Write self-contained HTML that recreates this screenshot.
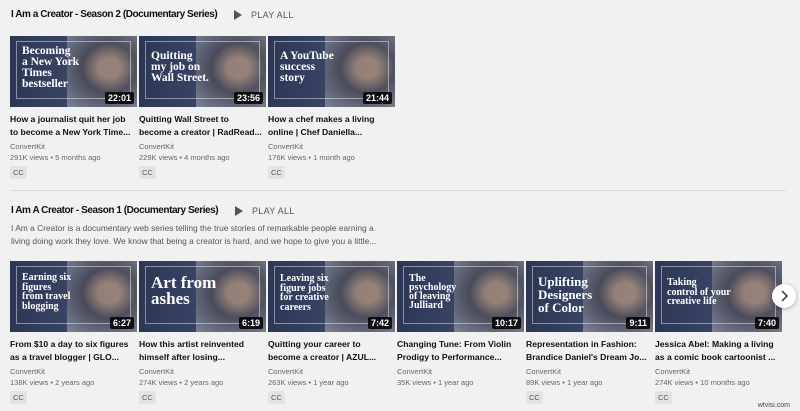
<!DOCTYPE html>
<html><head><meta charset="utf-8"><style>
body{margin:0;width:800px;height:411px;background:#f1f1f1;font-family:"Liberation Sans",sans-serif;position:relative;overflow:hidden;color:#0f0f0f}
.h{position:absolute;font-size:10px;font-weight:bold;color:#111;letter-spacing:-.45px}
.pa{position:absolute;font-size:9px;color:#555;letter-spacing:.3px}
.pa:before{content:"";position:absolute;left:-17px;top:0;border-left:8px solid #555;border-top:5px solid transparent;border-bottom:5px solid transparent}
.card{position:absolute;width:127px}
.th{width:127px;height:71px;position:relative;overflow:hidden;background:linear-gradient(90deg,#2c3655 0%,#3a4566 50%,#6a7088 100%)}
.th .fr{position:absolute;left:6px;top:5px;right:6px;bottom:8px;border:1px solid rgba(255,255,255,.45)}
.th .p{position:absolute;right:0;top:0;width:55%;height:100%;background:radial-gradient(ellipse at 60% 45%,#a58a78 0 18%,#4a4a55 45%,#8e93a5 100%);opacity:.8}
.th .t{position:absolute;left:12px;top:10px;font-family:"Liberation Serif",serif;color:#fff;font-size:11.5px;line-height:11px;font-weight:bold;z-index:2}
.th .d{position:absolute;right:3px;bottom:3px;background:rgba(0,0,0,.85);color:#fff;font-size:9px;font-weight:bold;padding:1px 3px;border-radius:2px;z-index:3}
.ti{font-size:8.6px;font-weight:bold;line-height:12.5px;margin-top:6px;white-space:nowrap;overflow:hidden}
.ch{font-size:7.5px;color:#666;margin-top:4px}
.v{font-size:7.5px;color:#666;margin-top:2px}
.cc{display:inline-block;background:#e3e3e3;color:#555;font-size:7.5px;padding:2px 3px;margin-top:4px;border-radius:2px}
.desc{position:absolute;left:11px;top:222px;font-size:8.4px;line-height:13px;color:#555;width:380px}
</style></head><body>
<div class="h" style="left:11px;top:9px">I Am a Creator - Season 2 (Documentary Series)</div>
<div class="pa" style="left:251px;top:10px">PLAY ALL</div>

<div class="card" style="left:10px;top:36px"><div class="th"><div class="p"></div><div class="fr"></div><div class="t">Becoming<br>a New York<br>Times<br>bestseller</div><div class="d">22:01</div></div>
<div class="ti">How a journalist quit her job<br>to become a New York Time...</div><div class="ch">ConvertKit</div><div class="v">291K views • 5 months ago</div><div class="cc">CC</div></div>
<div class="card" style="left:139px;top:36px"><div class="th"><div class="p"></div><div class="fr"></div><div class="t" style="top:15px">Quitting<br>my job on<br>Wall Street.</div><div class="d">23:56</div></div>
<div class="ti">Quitting Wall Street to<br>become a creator | RadRead...</div><div class="ch">ConvertKit</div><div class="v">229K views • 4 months ago</div><div class="cc">CC</div></div>
<div class="card" style="left:268px;top:36px"><div class="th"><div class="p"></div><div class="fr"></div><div class="t" style="top:15px">A YouTube<br>success<br>story</div><div class="d">21:44</div></div>
<div class="ti">How a chef makes a living<br>online | Chef Daniella...</div><div class="ch">ConvertKit</div><div class="v">176K views • 1 month ago</div><div class="cc">CC</div></div>

<div style="position:absolute;left:10px;right:14px;top:190px;height:1px;background:#dcdcdc"></div>

<div class="h" style="left:11px;top:205px">I Am A Creator - Season 1 (Documentary Series)</div>
<div class="pa" style="left:252px;top:206px">PLAY ALL</div>
<div class="desc">I Am a Creator is a documentary web series telling the true stories of remarkable people earning a living doing work they love. We know that being a creator is hard, and we hope to give you a little...</div>

<div class="card" style="left:10px;top:261px"><div class="th"><div class="p"></div><div class="fr"></div><div class="t" style="font-size:10px;line-height:9.5px;top:12px">Earning six<br>figures<br>from travel<br>blogging</div><div class="d">6:27</div></div>
<div class="ti">From $10 a day to six figures<br>as a travel blogger | GLO...</div><div class="ch">ConvertKit</div><div class="v">138K views • 2 years ago</div><div class="cc">CC</div></div>
<div class="card" style="left:139px;top:261px"><div class="th"><div class="p"></div><div class="fr"></div><div class="t" style="font-size:17px;line-height:16px;top:14px">Art from<br>ashes</div><div class="d">6:19</div></div>
<div class="ti">How this artist reinvented<br>himself after losing...</div><div class="ch">ConvertKit</div><div class="v">274K views • 2 years ago</div><div class="cc">CC</div></div>
<div class="card" style="left:268px;top:261px"><div class="th"><div class="p"></div><div class="fr"></div><div class="t" style="font-size:10px;line-height:9.5px;top:13px">Leaving six<br>figure jobs<br>for creative<br>careers</div><div class="d">7:42</div></div>
<div class="ti">Quitting your career to<br>become a creator | AZUL...</div><div class="ch">ConvertKit</div><div class="v">263K views • 1 year ago</div><div class="cc">CC</div></div>
<div class="card" style="left:397px;top:261px"><div class="th"><div class="p"></div><div class="fr"></div><div class="t" style="font-size:10px;line-height:9px;top:13px">The<br>psychology<br>of leaving<br>Julliard</div><div class="d">10:17</div></div>
<div class="ti">Changing Tune: From Violin<br>Prodigy to Performance...</div><div class="ch">ConvertKit</div><div class="v">35K views • 1 year ago</div></div>
<div class="card" style="left:526px;top:261px"><div class="th"><div class="p"></div><div class="fr"></div><div class="t" style="font-size:13px;line-height:13px;top:14px">Uplifting<br>Designers<br>of Color</div><div class="d">9:11</div></div>
<div class="ti">Representation in Fashion:<br>Brandice Daniel's Dream Jo...</div><div class="ch">ConvertKit</div><div class="v">89K views • 1 year ago</div><div class="cc">CC</div></div>
<div class="card" style="left:655px;top:261px"><div class="th"><div class="p"></div><div class="fr"></div><div class="t" style="font-size:10px;line-height:9.5px;top:17px">Taking<br>control of your<br>creative life</div><div class="d">7:40</div></div>
<div class="ti">Jessica Abel: Making a living<br>as a comic book cartoonist ...</div><div class="ch">ConvertKit</div><div class="v">274K views • 10 months ago</div><div class="cc">CC</div></div>

<div style="position:absolute;left:772px;top:284px;width:24px;height:24px;border-radius:50%;background:#fff;box-shadow:0 1px 4px rgba(0,0,0,.3)"><svg width="24" height="24"><path d="M10 7l5 5-5 5" stroke="#333" stroke-width="1.5" fill="none"/></svg></div>
<div style="position:absolute;right:10px;top:402px;font-size:7px;color:#444">wtvisi.com</div>
</body></html>
